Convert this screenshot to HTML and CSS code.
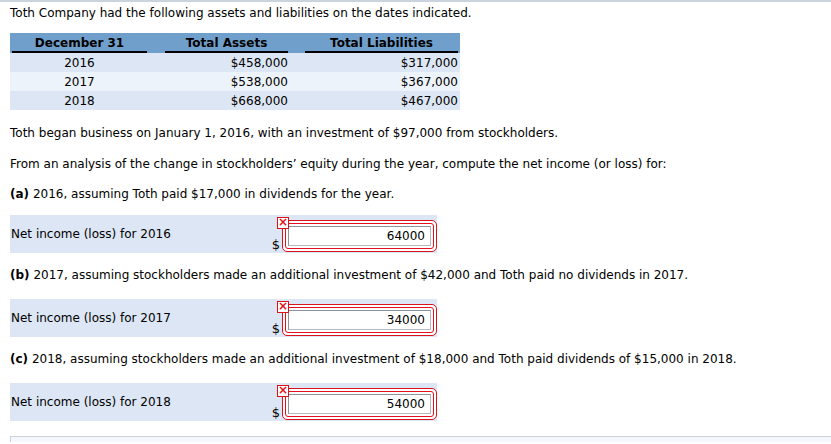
FILE: index.html
```html
<!DOCTYPE html>
<html lang="en">
<head>
  <meta charset="UTF-8">
  <title>Toth Company</title>
  <link rel="stylesheet" href="styles.css">
</head>
<body>
  <div class="question">
    <p class="lead">Toth Company had the following assets and liabilities on the dates indicated.</p>

    <table class="data-table">
      <thead>
        <tr>
          <th class="col-date"><span>December 31</span></th>
          <th class="col-amt"><span>Total Assets</span></th>
          <th class="col-liab"><span>Total Liabilities</span></th>
        </tr>
      </thead>
      <tbody>
        <tr><td class="col-date">2016</td><td class="col-amt">$458,000</td><td class="col-liab">$317,000</td></tr>
        <tr><td class="col-date">2017</td><td class="col-amt">$538,000</td><td class="col-liab">$367,000</td></tr>
        <tr><td class="col-date">2018</td><td class="col-amt">$668,000</td><td class="col-liab">$467,000</td></tr>
      </tbody>
    </table>

    <p class="text first">Toth began business on January 1, 2016, with an investment of $97,000 from stockholders.</p>
    <p class="text">From an analysis of the change in stockholders’ equity during the year, compute the net income (or loss) for:</p>

    <p class="text part"><b>(a)</b> 2016, assuming Toth paid $17,000 in dividends for the year.</p>
    <div class="answer-row">
      <span class="answer-label">Net income (loss) for 2016</span>
      <span class="dollar">$</span>
      <div class="field">
        <span class="wrong">×</span>
        <div class="field-inner"><input class="field-input" type="text" value="64000"></div>
      </div>
    </div>

    <p class="text part"><b>(b)</b> 2017, assuming stockholders made an additional investment of $42,000 and Toth paid no dividends in 2017.</p>
    <div class="answer-row later">
      <span class="answer-label">Net income (loss) for 2017</span>
      <span class="dollar">$</span>
      <div class="field">
        <span class="wrong">×</span>
        <div class="field-inner"><input class="field-input" type="text" value="34000"></div>
      </div>
    </div>

    <p class="text part"><b>(c)</b> 2018, assuming stockholders made an additional investment of $18,000 and Toth paid dividends of $15,000 in 2018.</p>
    <div class="answer-row later">
      <span class="answer-label">Net income (loss) for 2018</span>
      <span class="dollar">$</span>
      <div class="field">
        <span class="wrong">×</span>
        <div class="field-inner"><input class="field-input" type="text" value="54000"></div>
      </div>
    </div>

    <div class="next-box"></div>
  </div>
</body>
</html>
```

FILE: styles.css
```css
body {
  margin: 0;
  background: #fff;
  color: #000;
  font-family: "DejaVu Sans", Verdana, sans-serif;
  font-size: 12px;
  line-height: 16px;
  border-top: 2px solid #cbd3de;
}
.question {
  padding: 0 0 0 10px;
}
p {
  margin: 0;
}
.lead {
  padding-top: 3px;
}
.data-table {
  border-collapse: collapse;
  width: 450px;
  margin-top: 12px;
}
.data-table th {
  background: #709fcb;
  font-weight: bold;
  padding: 0 2px 0 0;
  height: 19px;
  vertical-align: bottom;
}
.data-table th span {
  display: block;
  border-bottom: 2px solid #000;
  line-height: 16px;
  padding-top: 2px;
  padding-bottom: 0;
}
.data-table td {
  height: 19px;
  padding: 0 2px 0 0;
}
.data-table tbody tr:nth-child(odd) td {
  background: #dce6f4;
}
.data-table tbody tr:nth-child(even) td {
  background: #edf3fb;
}
.data-table .col-date {
  width: 135px;
  padding-left: 2px;
  text-align: center;
}
.data-table .col-amt {
  width: 123px;
  padding-left: 16px;
  text-align: right;
}
.data-table th.col-amt, .data-table th.col-liab {
  text-align: center;
}
.data-table .col-liab {
  padding-left: 15px;
  text-align: right;
}
.text {
  margin-top: 15px;
}
.text.first {
  margin-top: 15px;
}
.part {
  margin-top: 14px;
}
.answer-row {
  display: flex;
  align-items: flex-end;
  width: 427px;
  height: 38px;
  box-sizing: border-box;
  padding: 5px 0 1px 1px;
  margin-top: 13px;
  margin-bottom: 14px;
  background: #dce6f4;
}
.answer-row.later {
  margin-top: 16px;
}
.answer-row + .part {
  margin-top: 0;
}
.answer-label {
  flex: 1;
  align-self: center;
  margin-top: -4px;
}
.dollar {
  margin-right: 2px;
  line-height: 14px;
  font-size: 13px;
}
.field {
  position: relative;
  width: 155px;
  height: 32px;
  box-sizing: border-box;
  border: 1px solid #d9141c;
  border-radius: 5px;
  padding: 2px;
  background: #fff;
}
.field-inner {
  height: 100%;
  box-sizing: border-box;
  border: 1px solid #e3111b;
  border-radius: 3px;
  padding: 2px;
}
.field-input {
  display: block;
  width: 100%;
  height: 100%;
  box-sizing: border-box;
  margin: 0;
  border: 1px solid #b5b9c0;
  border-top-color: #8d939b;
  border-left-color: #8d939b;
  padding: 0 5px 0 2px;
  font-family: inherit;
  font-size: 12px;
  text-align: right;
  color: #000;
  background: #fff;
}
.wrong {
  position: absolute;
  left: -6px;
  top: -4px;
  width: 12px;
  height: 12px;
  box-sizing: border-box;
  border: 1px solid #d9141c;
  background: #fff;
  color: #e3111b;
  font-weight: bold;
  font-size: 12px;
  line-height: 9px;
  text-align: center;
}
.next-box {
  margin-top: 15px;
  height: 5px;
  border: 1px solid #c9d2de;
  border-right: none;
  border-bottom: none;
  background: #f4f7fb;
}
```
